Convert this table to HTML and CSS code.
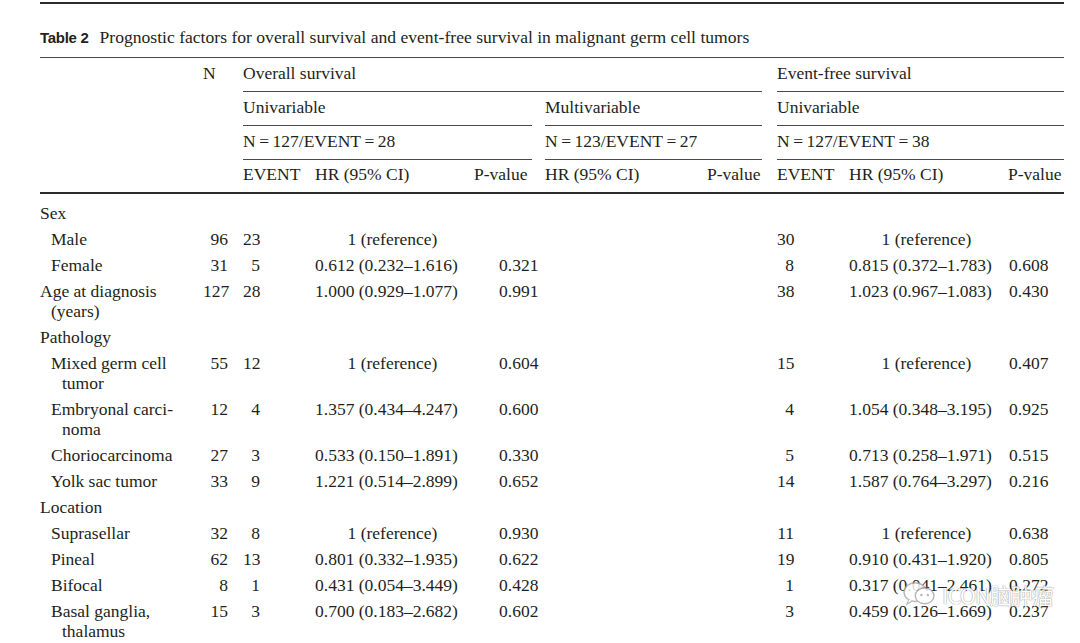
FILE: index.html
```html
<!DOCTYPE html>
<html lang="en">
<head>
<meta charset="utf-8">
<title>Table 2</title>
<link rel="stylesheet" href="styles.css">
</head>
<body>
<div class="page">
  <div class="rule-top"></div>
  <p class="caption"><span class="cap-label">Table 2</span><span class="cap-text">Prognostic factors for overall survival and event-free survival in malignant germ cell tumors</span></p>
  <table class="tbl">
    <colgroup>
      <col class="w-label"><col class="w-n"><col class="w-ev"><col class="w-hr"><col class="w-p1"><col class="w-mhr"><col class="w-mp"><col class="w-ev"><col class="w-hr"><col class="w-p3">
    </colgroup>
    <thead>
      <tr>
        <th rowspan="4" class="h-side"></th>
        <th rowspan="4" class="h-side h-n">N</th>
        <th colspan="5" class="grp gap"><div class="hd">Overall survival</div></th>
        <th colspan="3" class="grp"><div class="hd">Event-free survival</div></th>
      </tr>
      <tr>
        <th colspan="3" class="grp gap-s"><div class="hd">Univariable</div></th>
        <th colspan="2" class="grp gap"><div class="hd">Multivariable</div></th>
        <th colspan="3" class="grp"><div class="hd">Univariable</div></th>
      </tr>
      <tr>
        <th colspan="3" class="grp gap-s"><div class="hd">N&thinsp;=&thinsp;127/EVENT&thinsp;=&thinsp;28</div></th>
        <th colspan="2" class="grp gap"><div class="hd">N&thinsp;=&thinsp;123/EVENT&thinsp;=&thinsp;27</div></th>
        <th colspan="3" class="grp"><div class="hd">N&thinsp;=&thinsp;127/EVENT&thinsp;=&thinsp;38</div></th>
      </tr>
      <tr class="sub">
        <th>EVENT</th><th>HR (95% CI)</th><th>P-value</th>
        <th>HR (95% CI)</th><th>P-value</th>
        <th>EVENT</th><th>HR (95% CI)</th><th>P-value</th>
      </tr>
    </thead>
    <tbody>
      <tr><td class="lbl">Sex</td><td></td><td></td><td></td><td></td><td></td><td></td><td></td><td></td><td></td></tr>
      <tr><td class="lbl sub-l">Male</td><td class="n">96</td><td class="ev">23</td><td class="ref">1 (reference)</td><td class="p1"></td><td></td><td></td><td class="ev">30</td><td class="ref">1 (reference)</td><td class="p3"></td></tr>
      <tr><td class="lbl sub-l">Female</td><td class="n">31</td><td class="ev">5</td><td class="hr">0.612 (0.232–1.616)</td><td class="p1">0.321</td><td></td><td></td><td class="ev">8</td><td class="hr">0.815 (0.372–1.783)</td><td class="p3">0.608</td></tr>
      <tr><td class="lbl">Age at diagnosis<br>(years)</td><td class="n">127</td><td class="ev">28</td><td class="hr">1.000 (0.929–1.077)</td><td class="p1">0.991</td><td></td><td></td><td class="ev">38</td><td class="hr">1.023 (0.967–1.083)</td><td class="p3">0.430</td></tr>
      <tr><td class="lbl">Pathology</td><td></td><td></td><td></td><td></td><td></td><td></td><td></td><td></td><td></td></tr>
      <tr><td class="lbl sub-l">Mixed germ cell<br>tumor</td><td class="n">55</td><td class="ev">12</td><td class="ref">1 (reference)</td><td class="p1">0.604</td><td></td><td></td><td class="ev">15</td><td class="ref">1 (reference)</td><td class="p3">0.407</td></tr>
      <tr><td class="lbl sub-l">Embryonal carci-<br>noma</td><td class="n">12</td><td class="ev">4</td><td class="hr">1.357 (0.434–4.247)</td><td class="p1">0.600</td><td></td><td></td><td class="ev">4</td><td class="hr">1.054 (0.348–3.195)</td><td class="p3">0.925</td></tr>
      <tr><td class="lbl sub-l">Choriocarcinoma</td><td class="n">27</td><td class="ev">3</td><td class="hr">0.533 (0.150–1.891)</td><td class="p1">0.330</td><td></td><td></td><td class="ev">5</td><td class="hr">0.713 (0.258–1.971)</td><td class="p3">0.515</td></tr>
      <tr><td class="lbl sub-l">Yolk sac tumor</td><td class="n">33</td><td class="ev">9</td><td class="hr">1.221 (0.514–2.899)</td><td class="p1">0.652</td><td></td><td></td><td class="ev">14</td><td class="hr">1.587 (0.764–3.297)</td><td class="p3">0.216</td></tr>
      <tr><td class="lbl">Location</td><td></td><td></td><td></td><td></td><td></td><td></td><td></td><td></td><td></td></tr>
      <tr><td class="lbl sub-l">Suprasellar</td><td class="n">32</td><td class="ev">8</td><td class="ref">1 (reference)</td><td class="p1">0.930</td><td></td><td></td><td class="ev">11</td><td class="ref">1 (reference)</td><td class="p3">0.638</td></tr>
      <tr><td class="lbl sub-l">Pineal</td><td class="n">62</td><td class="ev">13</td><td class="hr">0.801 (0.332–1.935)</td><td class="p1">0.622</td><td></td><td></td><td class="ev">19</td><td class="hr">0.910 (0.431–1.920)</td><td class="p3">0.805</td></tr>
      <tr><td class="lbl sub-l">Bifocal</td><td class="n">8</td><td class="ev">1</td><td class="hr">0.431 (0.054–3.449)</td><td class="p1">0.428</td><td></td><td></td><td class="ev">1</td><td class="hr">0.317 (0.041–2.461)</td><td class="p3">0.272</td></tr>
      <tr><td class="lbl sub-l">Basal ganglia,<br>thalamus</td><td class="n">15</td><td class="ev">3</td><td class="hr">0.700 (0.183–2.682)</td><td class="p1">0.602</td><td></td><td></td><td class="ev">3</td><td class="hr">0.459 (0.126–1.669)</td><td class="p3">0.237</td></tr>
    </tbody>
  </table>
  <div class="watermark" aria-hidden="true">
    <svg class="wm-logo" width="34" height="28" viewBox="0 0 36 30">
      <ellipse cx="14" cy="13" rx="12" ry="10" fill="#fff" stroke="#aaa" stroke-width="1.5"/>
      <path d="M7 21 L5 26 L11 22.5" fill="#fff" stroke="#aaa" stroke-width="1.2"/>
      <ellipse cx="24" cy="17" rx="10" ry="8.5" fill="#fff" stroke="#aaa" stroke-width="1.5"/>
      <circle cx="20.5" cy="16" r="1.3" fill="#aaa"/>
      <circle cx="27.5" cy="16" r="1.3" fill="#aaa"/>
    </svg>
    <span class="wm-text">ICON脑肿瘤</span>
  </div>
</div>
</body>
</html>
```

FILE: styles.css
```css
html, body {
  margin: 0;
  padding: 0;
  background: #ffffff;
}

body {
  color: #231f20;
  font-family: "Liberation Serif", "Times New Roman", serif;
}

.page {
  position: relative;
  width: 1024px;
  padding: 2px 0 0 40px;
}

.rule-top {
  height: 2px;
  background: #2b2b2b;
}

.caption {
  margin: 23px 0 10px;
  height: 20px;
  line-height: 20px;
  font-size: 17.6px;
  white-space: nowrap;
}

.cap-label {
  font-family: "Liberation Sans", Arial, sans-serif;
  font-weight: bold;
  font-size: 15px;
  letter-spacing: -0.3px;
  margin-right: 11px;
}

.tbl {
  width: 1024px;
  table-layout: fixed;
  border-collapse: separate;
  border-spacing: 0;
  border-top: 1px solid #4a4a4a;
  font-size: 17.5px;
  line-height: 20px;
}

.w-label { width: 163px; }
.w-n { width: 40px; }
.w-ev { width: 72px; }
.w-hr { width: 159px; }
.w-p1 { width: 71px; }
.w-mhr { width: 162px; }
.w-mp { width: 70px; }
.w-p3 { width: 56px; }

th {
  font-weight: normal;
  text-align: left;
  padding: 0;
  vertical-align: top;
  white-space: nowrap;
}

.h-side {
  border-bottom: 2px solid #2b2b2b;
}

.h-n {
  padding-top: 5px;
}

.grp {
  padding-right: 0;
}

.gap {
  padding-right: 15px;
}

.gap-s {
  padding-right: 13px;
}

.hd {
  padding: 5px 0 8px;
  border-bottom: 1px solid #4a4a4a;
}

.sub th {
  padding: 4px 0 8px;
  border-bottom: 2px solid #2b2b2b;
}

td {
  padding: 3px 0;
  vertical-align: top;
  white-space: nowrap;
}

tbody tr:first-child td {
  padding-top: 9px;
}

.lbl {
  padding-left: 11px;
  text-indent: -11px;
}

.lbl.sub-l {
  padding-left: 22px;
}

.n {
  text-align: right;
  padding-right: 15px;
}

.ev {
  text-align: right;
  padding-right: 55px;
}

.ref {
  text-align: center;
  padding-right: 4px;
}

.hr {
  text-align: left;
}

.p1 {
  padding-left: 25px;
}

.p3 {
  padding-left: 1px;
}

.watermark {
  position: absolute;
  left: 902px;
  top: 580px;
  display: flex;
  align-items: center;
  gap: 6px;
  white-space: nowrap;
  opacity: 0.85;
  pointer-events: none;
}

.wm-text {
  font-family: "Noto Sans CJK SC", "Noto Sans", sans-serif;
  font-size: 22px;
  line-height: 28px;
  color: #ffffff;
  letter-spacing: -1px;
  text-shadow: 0 0 1px #888, 0 0 1px #888;
}
```
